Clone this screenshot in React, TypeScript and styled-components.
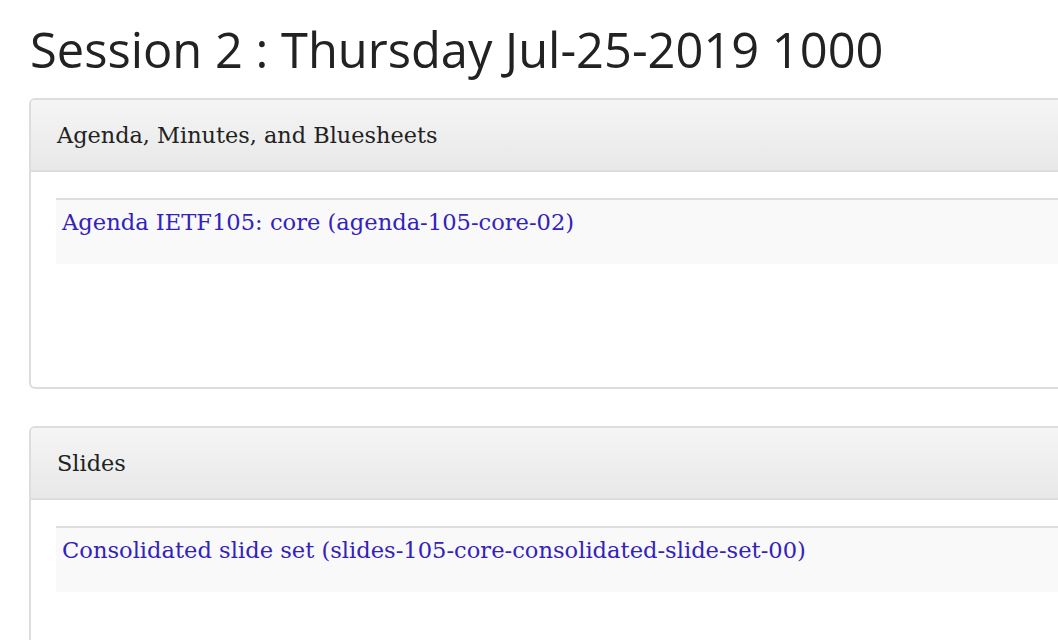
import styled, { createGlobalStyle } from 'styled-components';

const GlobalStyle = createGlobalStyle`
    html, body {
        margin: 0;
        padding: 0;
        background: #fff;
    }
    body {
        font-family: "DejaVu Serif", serif;
        color: #222;
        overflow: hidden;
    }
`;

interface Material {
    title: string
    name: string
}

interface Section {
    heading: string
    items: Material[]
}

const sections: Section[] = [
    {
        heading: 'Agenda, Minutes, and Bluesheets',
        items: [{ title: 'Agenda IETF105: core', name: 'agenda-105-core-02' }],
    },
    {
        heading: 'Slides',
        items: [{ title: 'Consolidated slide set', name: 'slides-105-core-consolidated-slide-set-00' }],
    },
];

export default function App(): JSX.Element {
    return (
        <>
            <GlobalStyle />
            <Page>
                <Title>Session 2 : Thursday Jul-25-2019 1000</Title>
                {sections.map((section) => (
                    <Panel key={section.heading}>
                        <PanelHeading>{section.heading}</PanelHeading>
                        <PanelBody>
                            <List>
                                {section.items.map((item) => (
                                    <ListItem key={item.name}>
                                        <MaterialLink href="#">
                                            {item.title} ({item.name})
                                        </MaterialLink>
                                    </ListItem>
                                ))}
                            </List>
                        </PanelBody>
                    </Panel>
                ))}
            </Page>
        </>
    )
}

const Page = styled.div`
    padding: 21px 0 0 29px;
    width: 1100px;
`;

const Title = styled.h2`
    margin: 0 0 21px 1px;
    font-family: "Open Sans", sans-serif;
    font-weight: 400;
    font-size: 48.8px;
    line-height: 56px;
    color: #222;
`;

const Panel = styled.div`
    border: 2px solid #ddd;
    border-radius: 6px;
    margin-bottom: 37px;
    background: #fff;
    overflow: hidden;
`;

const PanelHeading = styled.div`
    height: 72px;
    box-sizing: border-box;
    padding: 0 26px;
    display: flex;
    align-items: center;
    background: linear-gradient(to bottom, #f5f5f5, #e8e8e8);
    border-bottom: 2px solid #ddd;
    font-size: 22.4px;
    color: #222;
`;

const PanelBody = styled.div`
    padding: 26px 0 0 25px;
    height: 215px;
    box-sizing: border-box;
`;

const List = styled.ul`
    list-style: none;
    margin: 0;
    padding: 0;
`;

const ListItem = styled.li`
    border-top: 2px solid #ddd;
    background: #f9f9f9;
    height: 66px;
    box-sizing: border-box;
    padding: 8px 6px;
`;

const MaterialLink = styled.a`
    color: #3322bb;
    text-decoration: none;
    font-size: 22.6px;
    line-height: 28px;
`;
